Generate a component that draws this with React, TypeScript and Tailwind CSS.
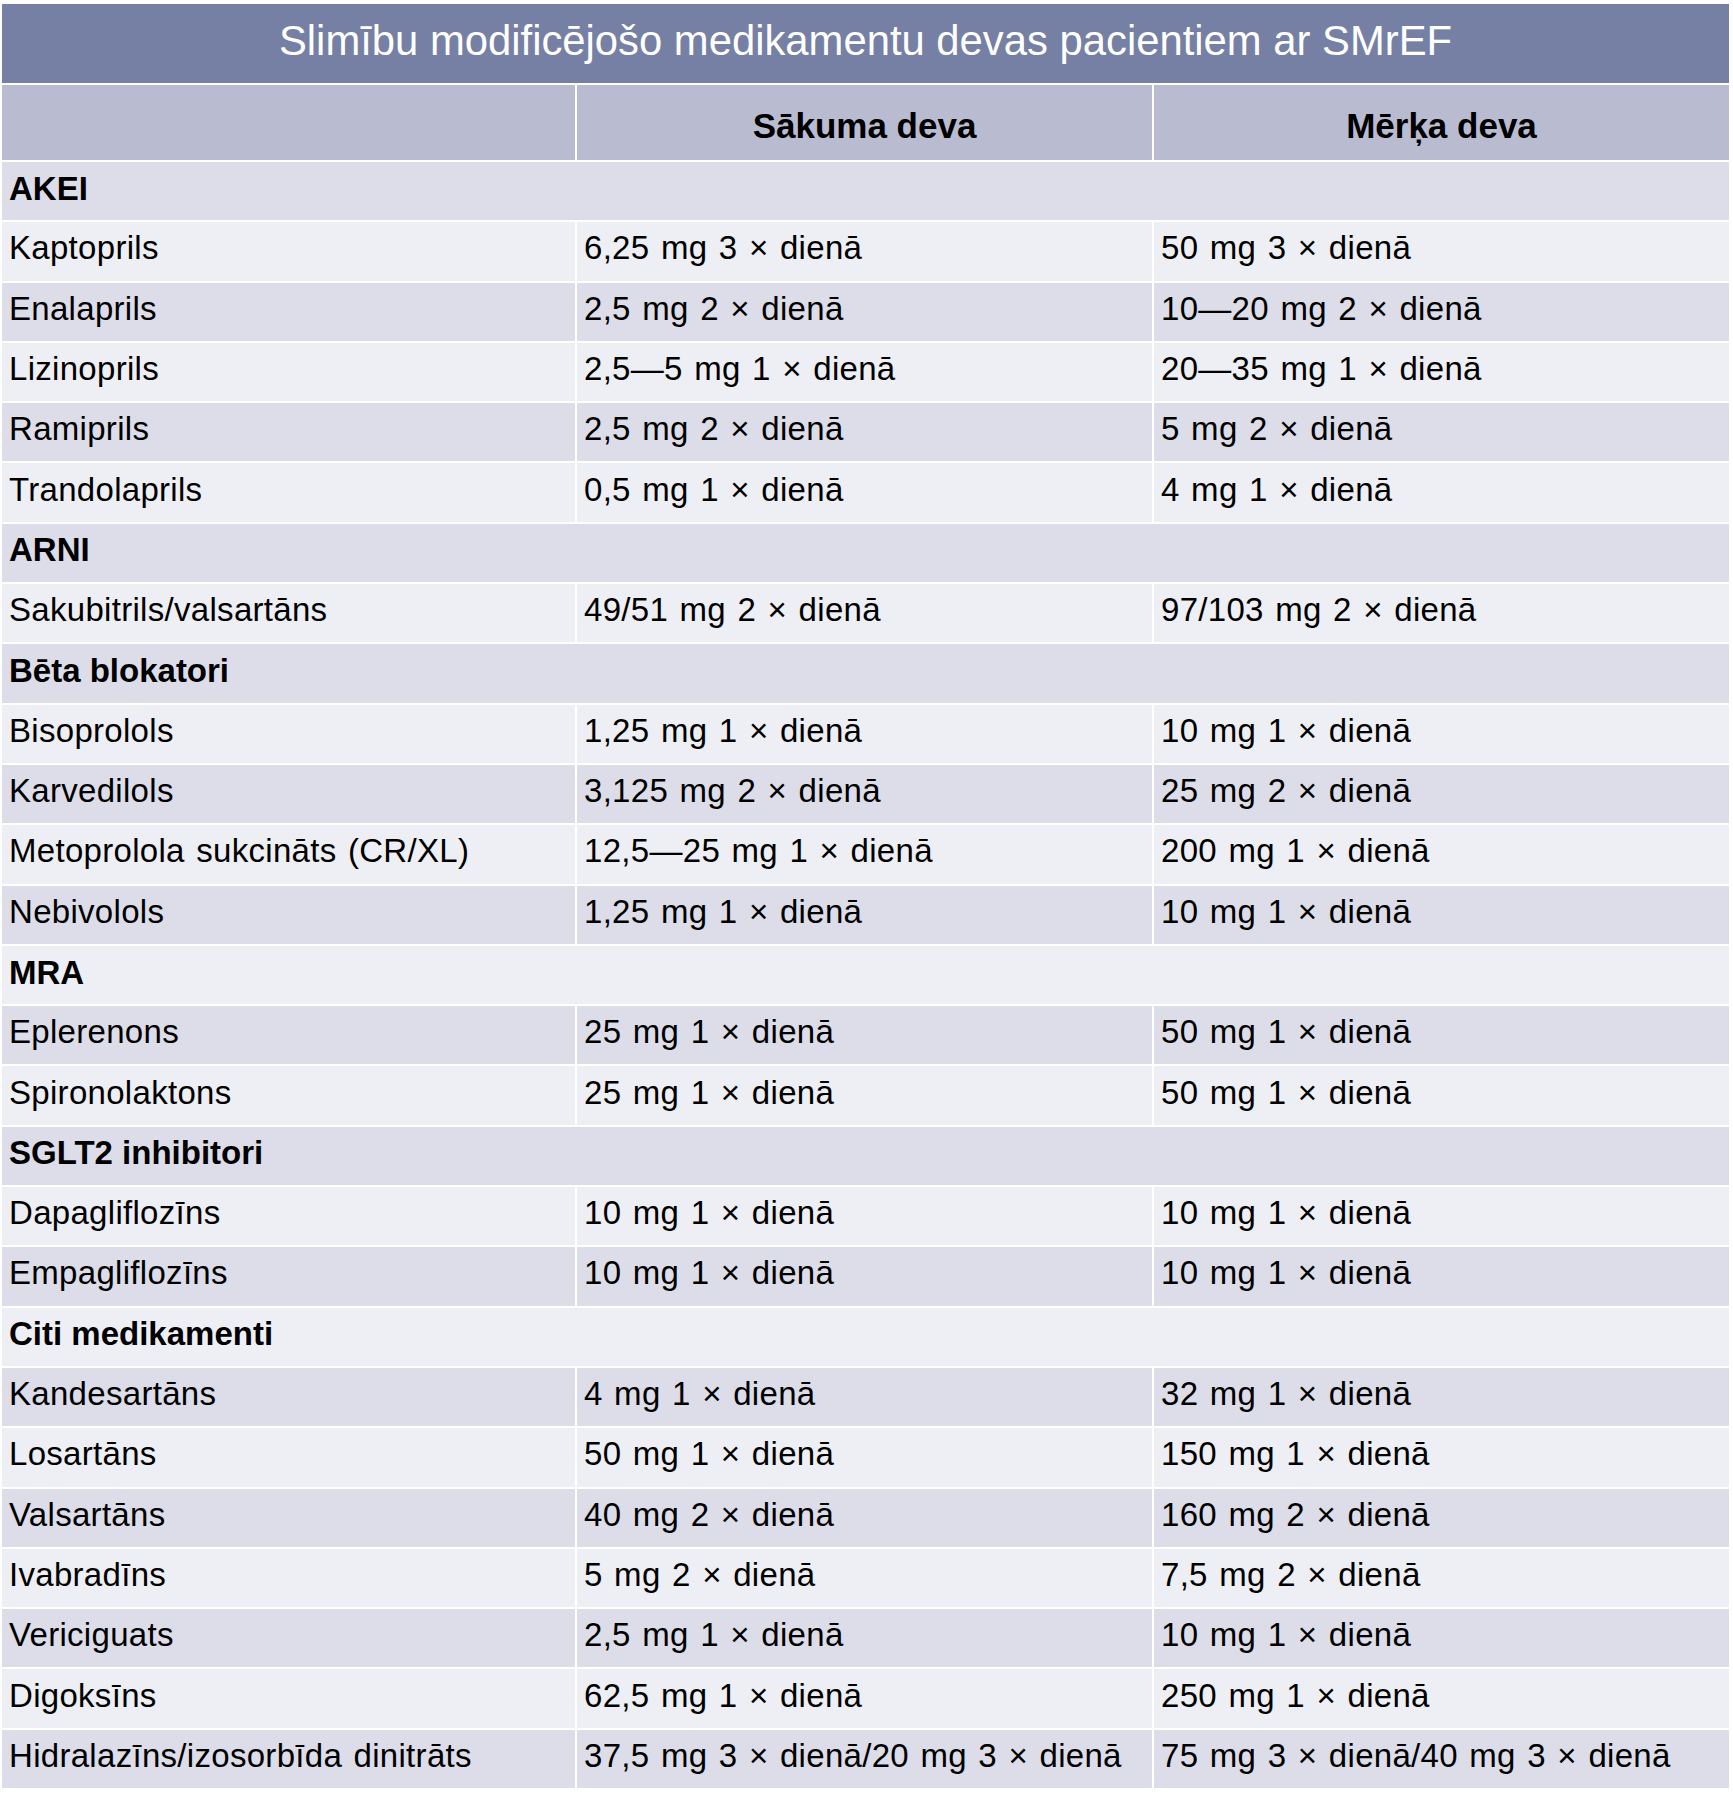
type Row = { section?: string; name?: string; start?: string; target?: string }

const rows: Row[] = [
  { section: 'AKEI' },
  { name: 'Kaptoprils', start: '6,25 mg 3 × dienā', target: '50 mg 3 × dienā' },
  { name: 'Enalaprils', start: '2,5 mg 2 × dienā', target: '10—20 mg 2 × dienā' },
  { name: 'Lizinoprils', start: '2,5—5 mg 1 × dienā', target: '20—35 mg 1 × dienā' },
  { name: 'Ramiprils', start: '2,5 mg 2 × dienā', target: '5 mg 2 × dienā' },
  { name: 'Trandolaprils', start: '0,5 mg 1 × dienā', target: '4 mg 1 × dienā' },
  { section: 'ARNI' },
  { name: 'Sakubitrils/valsartāns', start: '49/51 mg 2 × dienā', target: '97/103 mg 2 × dienā' },
  { section: 'Bēta blokatori' },
  { name: 'Bisoprolols', start: '1,25 mg 1 × dienā', target: '10 mg 1 × dienā' },
  { name: 'Karvedilols', start: '3,125 mg 2 × dienā', target: '25 mg 2 × dienā' },
  { name: 'Metoprolola sukcināts (CR/XL)', start: '12,5—25 mg 1 × dienā', target: '200 mg 1 × dienā' },
  { name: 'Nebivolols', start: '1,25 mg 1 × dienā', target: '10 mg 1 × dienā' },
  { section: 'MRA' },
  { name: 'Eplerenons', start: '25 mg 1 × dienā', target: '50 mg 1 × dienā' },
  { name: 'Spironolaktons', start: '25 mg 1 × dienā', target: '50 mg 1 × dienā' },
  { section: 'SGLT2 inhibitori' },
  { name: 'Dapagliflozīns', start: '10 mg 1 × dienā', target: '10 mg 1 × dienā' },
  { name: 'Empagliflozīns', start: '10 mg 1 × dienā', target: '10 mg 1 × dienā' },
  { section: 'Citi medikamenti' },
  { name: 'Kandesartāns', start: '4 mg 1 × dienā', target: '32 mg 1 × dienā' },
  { name: 'Losartāns', start: '50 mg 1 × dienā', target: '150 mg 1 × dienā' },
  { name: 'Valsartāns', start: '40 mg 2 × dienā', target: '160 mg 2 × dienā' },
  { name: 'Ivabradīns', start: '5 mg 2 × dienā', target: '7,5 mg 2 × dienā' },
  { name: 'Vericiguats', start: '2,5 mg 1 × dienā', target: '10 mg 1 × dienā' },
  { name: 'Digoksīns', start: '62,5 mg 1 × dienā', target: '250 mg 1 × dienā' },
  {
    name: 'Hidralazīns/izosorbīda dinitrāts',
    start: '37,5 mg 3 × dienā/20 mg 3 × dienā',
    target: '75 mg 3 × dienā/40 mg 3 × dienā',
  },
]

export default function App() {
  return (
    <div className="min-h-screen bg-white pt-[4px] pl-[2px] font-['Liberation_Sans',Arial,sans-serif] text-black">
      <div className="grid w-[1727px] grid-cols-[573px_575px_575px] gap-[2px]">
        {/* title */}
        <div className="col-span-3 flex h-[79px] items-center justify-center bg-[#7680a4] pb-[6px] text-[41.8px] leading-none text-white">
          Slimību modificējošo medikamentu devas pacientiem ar SMrEF
        </div>

        {/* column headers */}
        <div className="h-[75px] bg-[#b9bcd0]" />
        <div className="flex h-[75px] items-center justify-center bg-[#b9bcd0] pt-[6px] text-[35px] font-bold leading-none">
          Sākuma deva
        </div>
        <div className="flex h-[75px] items-center justify-center bg-[#b9bcd0] pt-[6px] text-[35px] font-bold leading-none">
          Mērķa deva
        </div>

        {rows.map((row, i) => {
          const bg = i % 2 === 0 ? 'bg-[#dcdde8]' : 'bg-[#eeeff4]'
          if (row.section) {
            return (
              <div
                key={row.section}
                className={`col-span-3 flex h-[58.3px] items-center pb-[6px] pl-[7px] text-[33px] font-bold leading-none ${bg}`}
              >
                {row.section}
              </div>
            )
          }
          return [row.name, row.start, row.target].map((text, j) => (
            <div
              key={`${row.name}-${j}`}
              className={`flex h-[58.3px] items-center whitespace-nowrap pb-[7px] pl-[7px] text-[33px] leading-none tracking-[0.3px] [word-spacing:2px] ${bg}`}
            >
              {text}
            </div>
          ))
        })}
      </div>
    </div>
  )
}
